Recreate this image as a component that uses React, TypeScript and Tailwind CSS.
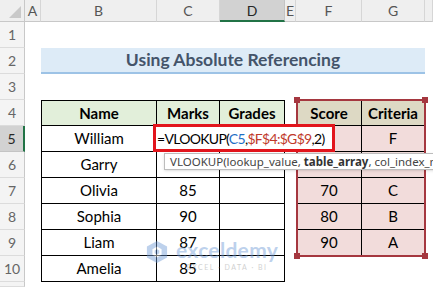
import React from 'react';
import clsx from 'clsx';

const COL_LETTERS = ['A', 'B', 'C', 'D', 'E', 'F', 'G', ''];

const names = ['William', 'Garry', 'Olivia', 'Sophia', 'Liam', 'Amelia'];
const marks = ['', '', '85', '90', '87', '85'];
const scores = ['', '', '70', '80', '90'];
const criteria = ['F', '', 'C', 'B', 'A'];

function ColHead({ label }: { label: string }) {
  const active = label === 'D';
  return (
    <div
      className={clsx(
        'flex items-center justify-center text-[14px] border-r',
        active
          ? 'bg-[#d2d2d2] border-r-[#c4c4c4] border-b-2 border-b-[#217346] text-[#262626]'
          : 'bg-[#efefef] border-r-[#d6d6d6] border-b border-b-[#c8c8c8] text-[#555]'
      )}
    >
      {label}
    </div>
  );
}

function RowHead({ n }: { n?: number }) {
  const active = n === 5;
  return (
    <div
      className={clsx(
        'flex items-center justify-center text-[14px] border-b',
        active
          ? 'bg-[#d2d2d2] border-b-[#c4c4c4] border-r-2 border-r-[#217346] text-[#262626]'
          : 'bg-[#f4f4f4] border-b-[#dcdcdc] border-r border-r-[#c8c8c8] text-[#666]'
      )}
    >
      {n}
    </div>
  );
}

const blank = <div />;

// main table B4:D10
function mainCells(r: number) {
  const head = r === 4;
  const i = r - 5;
  const base = 'flex items-center justify-center border-r border-b border-black text-[15px] text-black';
  const top = head ? 'border-t bg-[#e2efda] font-bold' : '';
  return [
    <div key="b" className={clsx(base, top, 'border-l')}>{head ? 'Name' : names[i]}</div>,
    <div key="c" className={clsx(base, top)}>{head ? 'Marks' : marks[i]}</div>,
    <div key="d" className={clsx(base, top)}>{head ? 'Grades' : ''}</div>,
  ];
}

// lookup table F4:G9
function scoreCells(r: number) {
  if (r > 9) return [<div key="f" />, <div key="g" />];
  const head = r === 4;
  const i = r - 5;
  const base = 'flex items-center justify-center border-r border-b border-black text-[15px] text-black';
  const fill = head ? 'border-t bg-[#ddd9c4] font-bold' : 'bg-[#f2dcdb]';
  return [
    <div key="f" className={clsx(base, fill, 'border-l')}>{head ? 'Score' : scores[i]}</div>,
    <div key="g" className={clsx(base, fill)}>{head ? 'Criteria' : criteria[i]}</div>,
  ];
}

function SheetRow({ r }: { r: number }) {
  if (r === 2) {
    return (
      <>
        <RowHead n={2} />
        {blank}
        <div className="col-span-6 flex items-center justify-center bg-[#ddebf7] border-b-2 border-b-[#9dc3e6] text-[17.5px] font-bold text-[#44546a]">
          Using Absolute Referencing
        </div>
        {blank}
      </>
    );
  }
  const inTables = r >= 4 && r <= 10;
  return (
    <>
      <RowHead n={r} />
      {blank}
      {inTables ? mainCells(r) : [<div key="b" />, <div key="c" />, <div key="d" />]}
      {blank}
      {inTables ? scoreCells(r) : [<div key="f" />, <div key="g" />]}
      {blank}
    </>
  );
}

function Logo() {
  return (
    <svg width="22" height="24" viewBox="0 0 24 26">
      <path d="M12 1 L23 7 L23 19 L12 25 L1 19 L1 7 Z" fill="#6f9ad6" />
      <path d="M12 7 L17 10 L17 16 L12 19 L7 16 L7 10 Z" fill="#ffffff" />
      <path d="M12 10 L14.5 11.5 L14.5 14.5 L12 16 L9.5 14.5 L9.5 11.5 Z" fill="#6f9ad6" />
    </svg>
  );
}

export default function App() {
  const rows = [1, 2, 3, 4, 5, 6, 7, 8, 9, 10];
  return (
    <div className="relative w-[433px] h-[287px] overflow-hidden bg-white [font-family:Lato,sans-serif]">
      <div className="grid h-full grid-cols-[25px_16px_116px_63px_65px_11px_66px_63px_1fr] grid-rows-[22px_repeat(10,26px)_1fr]">
        {/* corner */}
        <div className="relative bg-[#efefef] border-r border-b border-[#c8c8c8]">
          <div className="absolute right-[3px] bottom-[3px] w-0 h-0 border-l-[12px] border-l-transparent border-b-[12px] border-b-[#c9c9c9]" />
        </div>
        {COL_LETTERS.map((c, i) => (
          <ColHead key={i} label={c} />
        ))}
        {rows.map(r => (
          <SheetRow key={r} r={r} />
        ))}
        <RowHead />
      </div>

      {/* selected range F4:G9 */}
      <div className="absolute left-[296px] top-[99px] w-[130px] h-[158px] border-2 border-[#a5373f]">
        <div className="absolute -left-[4px] -top-[4px] w-[6px] h-[6px] bg-[#a5373f]" />
        <div className="absolute -right-[4px] -top-[4px] w-[6px] h-[6px] bg-[#a5373f]" />
        <div className="absolute -left-[4px] -bottom-[4px] w-[6px] h-[6px] bg-[#a5373f]" />
        <div className="absolute -right-[4px] -bottom-[4px] w-[6px] h-[6px] bg-[#a5373f]" />
      </div>

      {/* formula being edited in D5 */}
      <div className="absolute left-[153px] top-[124px] w-[182px] h-[28px] border-[3px] border-[#e2151c] bg-white flex items-center">
        <span className="pl-px text-[14px] tracking-[-0.7px] text-black whitespace-nowrap">
          =VLOOKUP(<span className="text-[#1f6fc5]">C5</span>,<span className="text-[#c0392b]">$F$4:$G$9</span>,2)
        </span>
      </div>

      {/* function tooltip */}
      <div className="absolute left-[164px] top-[153px] h-[17px] pl-[5px] pr-2 flex items-center bg-white border border-[#bdbdbd] shadow-sm whitespace-nowrap text-[11.5px] text-[#444] [font-family:'Noto_Sans',sans-serif]">
        <span>
          VLOOKUP(lookup_value, <b className="font-bold text-[#333]">table_array</b>, col_index_num, [range_lookup])
        </span>
      </div>

      {/* watermark */}
      <div className="absolute left-[146px] top-[240px] flex items-start gap-[8px] opacity-45 pointer-events-none">
        <Logo />
        <div className="flex flex-col items-center">
          <span className="text-[21px] leading-[20px] font-bold text-[#6f9ad6] tracking-[0.3px]">exceldemy</span>
          <span className="mt-[3px] text-[7px] leading-[8px] tracking-[1.5px] text-[#9a9a9a]">EXCEL · DATA · BI</span>
        </div>
      </div>
    </div>
  );
}
